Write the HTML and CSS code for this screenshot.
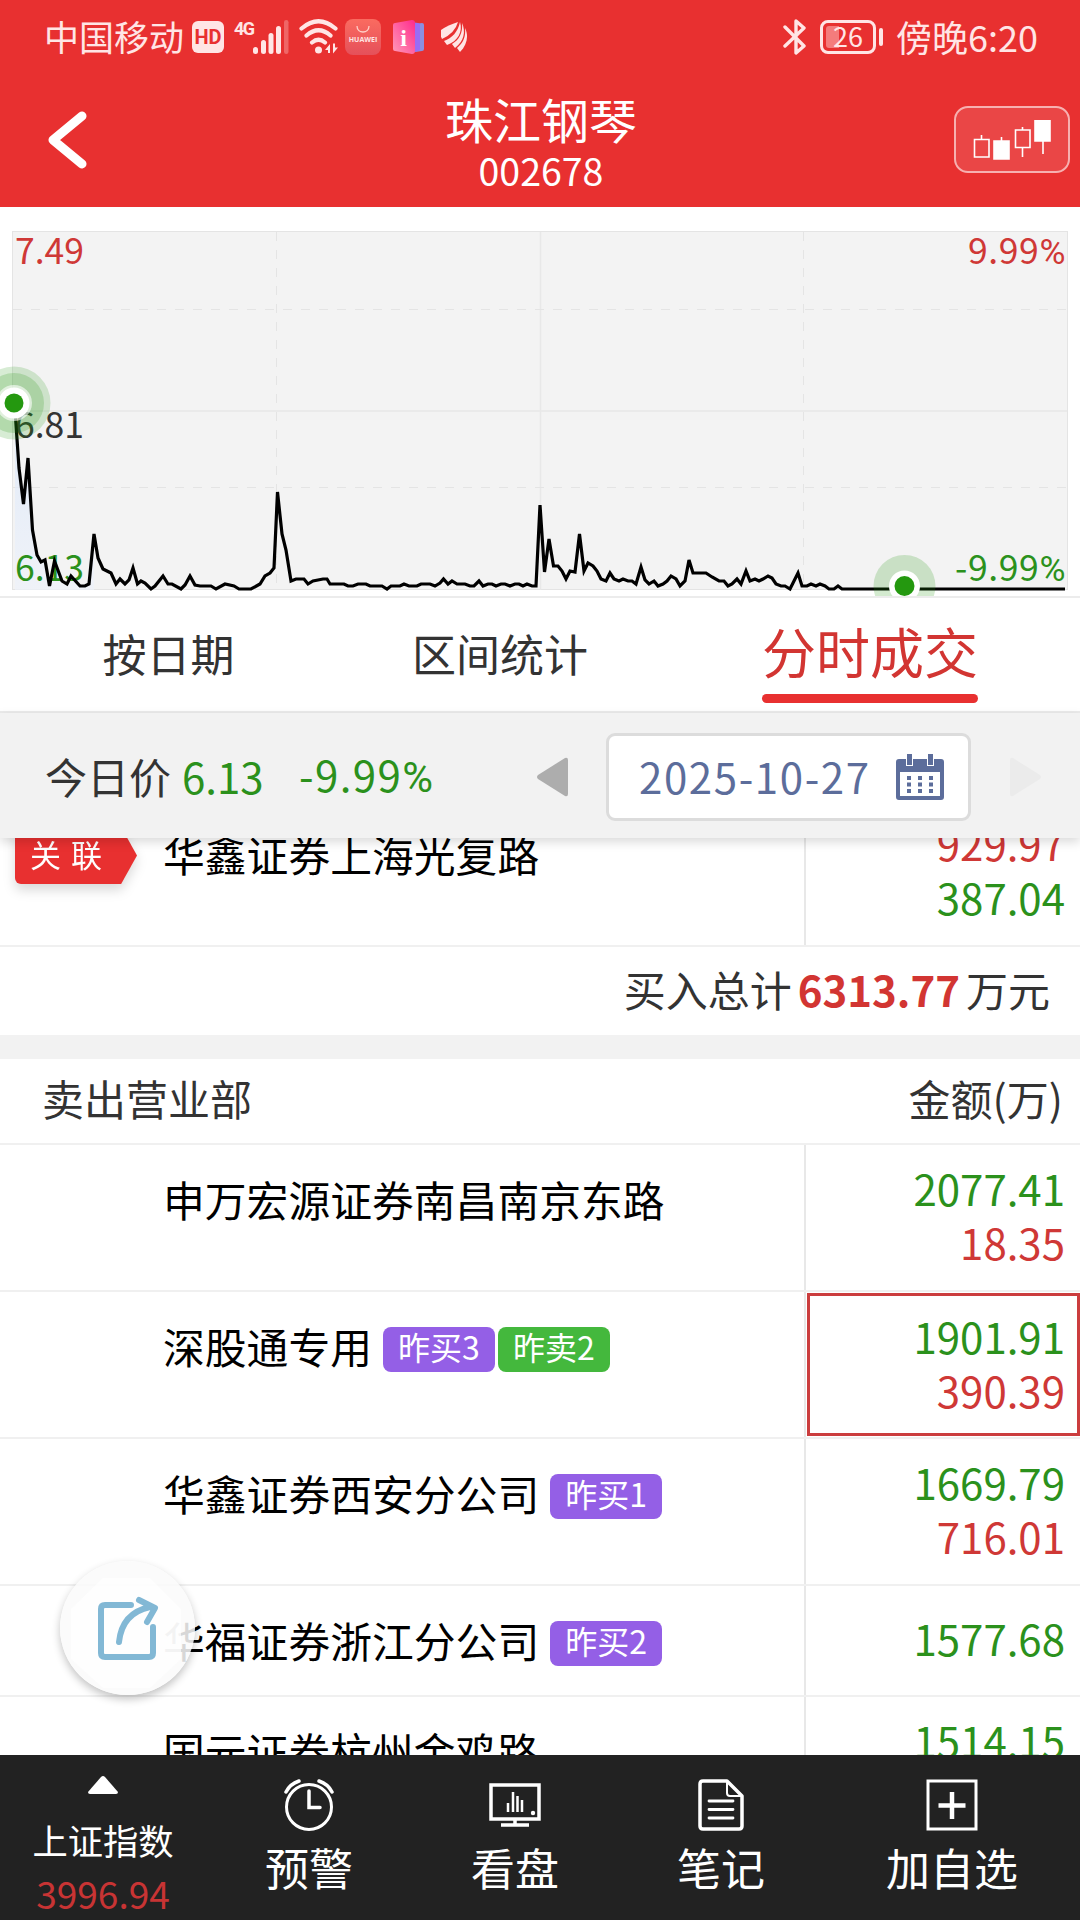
FILE: index.html
```html
<!DOCTYPE html>
<html lang="zh-CN">
<head>
  <meta charset="UTF-8">
  <title>珠江钢琴 002678</title>
  <link rel="stylesheet" href="styles.css">
</head>
<body>
  <div class="status">
    <span class="carrier">中国移动</span>
    <span class="hd">HD</span>
    <span class="net">4G</span>
    <svg class="signal" width="36" height="34" viewBox="0 0 36 34" fill="#ffe5e5">
      <rect x="0" y="27" width="5" height="7" rx="2.5"/>
      <rect x="8" y="20" width="5" height="14" rx="2.5"/>
      <rect x="15.5" y="13" width="5" height="21" rx="2.5"/>
      <rect x="23" y="6" width="5" height="28" rx="2.5"/>
      <rect x="31" y="0" width="4.500" height="34" rx="2.2" opacity=".3"/>
    </svg>
    <svg class="wifi" width="42" height="36" viewBox="0 0 42 36" fill="none" stroke="#ffe5e5" stroke-width="4.200" stroke-linecap="round">
      <path d="M2.500 9.500Q19.500-5 36.500 9.500M7.500 16.500Q19.500 6 31.500 16.500M13 23.500Q19.500 18 26 23.500"/>
      <circle cx="19.500" cy="31" r="3.500" fill="#ffe5e5" stroke="none"/>
      <path d="M26 31l5-6v9h-2v-3zM34 24.500v10l5-6h-3v-4z" fill="#ffe5e5" stroke="none"/>
    </svg>
    <span class="store"><svg width="14" height="7" viewBox="0 0 14 7" fill="none" stroke="#ffd0c8" stroke-width="1.300"><path d="M1 0c0 8 12 8 12 0"/></svg>HUAWEI</span>
    <svg class="info" width="32" height="34" viewBox="0 0 32 34">
      <path d="M22 4l7-1q2 0 2 2v24q0 2-2 2l-7 1z" fill="#8b8fe0"/>
      <path d="M18 2l7 1q2 0 2 2v24q0 2-2 2l-7 2z" fill="#9a6cf5"/>
      <path d="M2 3L19 0q3 0 3 3v28q0 3-3 3L2 31q-2 0-2-2V5q0-2 2-2z" fill="url(#pink)"/>
      <text x="10.500" y="26" class="info-i">i</text>
      <defs><linearGradient id="pink" x1="0" y1="1" x2="1" y2="0"><stop offset="0" stop-color="#ff9ab8"/><stop offset="1" stop-color="#ff2a8c"/></linearGradient></defs>
    </svg>
    <svg class="wing" width="27" height="32" viewBox="0 0 27 32" fill="#ffe5e5">
      <path d="M0 9Q7 4 17 1Q14 12 1 18Q-1 14 0 9z"/>
      <path d="M19 1C17 11 11 17 3 20l3 4C17 20 22 11 19 1z"/>
      <path d="M21 2C22 12 18 19 11 23l3 4C23 20 25 11 21 2z"/>
      <path d="M24 7c1 9-2 15-8 20l3 4c7-7 9-16 5-24z"/>
    </svg>
    <svg class="bt" width="24" height="38" viewBox="0 0 24 38" fill="none" stroke="#ffe5e5" stroke-width="3.400" stroke-linejoin="round" stroke-linecap="round">
      <path d="M2 9l19 19-8 7V3l8 7L2 28"/>
    </svg>
    <span class="battery"><i></i><b>26</b></span>
    <span class="nub"></span>
    <span class="time">傍晚6:20</span>
  </div>

  <div class="header">
    <svg class="back" width="44" height="62" viewBox="0 0 44 62" fill="none" stroke="#fff" stroke-width="9" stroke-linecap="round" stroke-linejoin="round">
      <path d="M38 7L9 31l29 24"/>
    </svg>
    <div class="stock">
      <div class="stock-name">珠江钢琴</div>
      <div class="stock-code">002678</div>
    </div>
    <div class="kline">
      <svg width="80" height="40" viewBox="0 0 80 40" fill="none" stroke="#fff" stroke-width="1.600">
        <path d="M1.500 19.500h14.500v17.500h-14.500zM8.500 19v-4M28.500 22v-5M42.500 10h14.500v17.500h-14.500zM49.500 10V7M49.500 28v9M70 20v14"/>
        <path d="M21 21h15v18H21zM62 0.800h15V21H62z" fill="#fff"/>
      </svg>
    </div>
  </div>

  <div class="chart">
    <svg width="1080" height="389" viewBox="0 207 1080 389">
      <defs>
        <linearGradient id="area" x1="0" y1="400" x2="0" y2="590" gradientUnits="userSpaceOnUse">
          <stop offset="0" stop-color="#d8e6fa" stop-opacity=".7"/>
          <stop offset="1" stop-color="#eef2fa" stop-opacity=".7"/>
        </linearGradient>
      </defs>
      <rect x="12.500" y="231.500" width="1055" height="358" fill="#f3f3f3" stroke="#e4e4e4"/>
      <path d="M13 411h1054M540.500 232v358" stroke="#e8e8e8" stroke-width="1.500"/>
      <path d="M13 309.500h1054M13 487.500h1054M276.500 232v358M803.500 232v358" stroke="#e4e4e4" stroke-dasharray="9 9"/>
      <path d="M15 410L19 468L23.500 504L28 458L32.500 530L37 555L41 563L45 560L49.500 586L55 561L63 581L67 584L72 575L80 586L85 586L89 584L94 534V590H15z" fill="url(#area)"/>
      <text x="15" y="264" class="up">7.49</text>
      <text x="1066" y="264" class="up end">9.99<tspan class="pct">%</tspan></text>
      <text x="15" y="438" class="mid">6.81</text>
      <text x="15" y="581" class="down">6.13</text>
      <text x="1066" y="581" class="down end">-9.99<tspan class="pct">%</tspan></text>
      <polyline class="price" points="15,410 19,468 23.500,504 28,458 32.500,530 37,555 41,562 45,560 49.500,586 54.500,561 62,581 67,584 71,576 80,586 85,586 89,584 94,534 98,558 103,569 111,573 116,584 120,579 125,584 129,580 133,568 137.500,584 141,581 145,583 151,589 155,586 163,576 168,584 172,584 181,589 185,585 190,576 195,585 200,586 211,586 216,589 225,584 234,586 239,589 251,589 260,584 265,576 270,573 274,568 277.500,492 282,534 286,550 291,581 296,579 304,579 308,584 313,581 323,579 327,579 330,584 344,584 348,586 353,586 358,584 366,584 370,586 382,586 387,589 391,586 400,586 404,584 409,586 417,586 421,584 430,584 435,586 440,583 443.500,579 448,584 452,581 457,584 465,584 470,586 474,586 479,581 483,586 488,584 492,584 496,586 501,584 505,584 510,586 515,584 519,584 523,586 527,584 532,586 536,586 540,505 544.500,572 549,539 553.500,566 558,566 562,571 566,579 570,571 575,572 579.500,534 584,571 588,563 593,566 597,571 601,579 606,581 610,573 614,579 619,581 623,579 628,581 632,581 636,584 641,567 645,580 649,584 654,581 658,586 663,584 667,581 671,576 676,579 680,586 685,581 689,560 693,573 706,573 712,577 719,581 724,581 728,586 732,584 737,579 741,584 746,571 750,581 755,579 759,581 763,579 768,576 772,578 776,584 781,586 785,586 790,589 798,573 802,586 807,586 811,584 816,586 820,584 825,586 829,589 834,589 838,586 842,589 1065,589"/>
      <g fill="#24980f">
        <circle cx="14" cy="403" r="36.500" fill-opacity=".18"/>
        <circle cx="14" cy="403" r="30" fill-opacity=".2"/>
        <circle cx="14" cy="403" r="18" fill="#fff" fill-opacity=".6"/>
        <circle cx="14" cy="403" r="15.500" fill="#fff"/>
        <circle cx="14" cy="403" r="9.500"/>
        <circle cx="904.500" cy="586" r="31" fill-opacity=".2"/>
        <circle cx="904.500" cy="586" r="15.500" fill="#fff"/>
        <circle cx="904.500" cy="586" r="10"/>
      </g>
    </svg>
  </div>

  <div class="tabs">
    <div class="tab">按日期</div>
    <div class="tab">区间统计</div>
    <div class="tab active"><span>分时成交</span></div>
  </div>

  <div class="datebar">
    <span class="today">今日价</span>
    <span class="today-price">6.13</span>
    <span class="today-rate">-9.99<span class="pct">%</span></span>
    <svg class="prev" width="32" height="40" viewBox="0 0 32 40" fill="#adadad"><path d="M1 18L28 1q3-1 3 2v34q0 3-3 2L1 22q-2-2 0-4z"/></svg>
    <div class="date">
      <span>2025-10-27</span>
      <svg width="48" height="46" viewBox="0 0 48 46" fill="#5c6d9b">
        <path d="M3 5h42q3 0 3 3v35q0 3-3 3H3q-3 0-3-3V8q0-3 3-3zM4 18v24h40V18z" fill-rule="evenodd"/>
        <path d="M10 0h7v12h-7zM31 0h7v12h-7z" fill="#fff"/>
        <path d="M11 0h5v11h-5zM32 0h5v11h-5zM11 22h4v4h-4zM22 22h4v4h-4zM33 22h4v4h-4zM11 28.500h4v4h-4zM22 28.500h4v4h-4zM33 28.500h4v4h-4zM11 35h4v4h-4zM22 35h4v4h-4zM33 35h4v4h-4z"/>
      </svg>
    </div>
    <svg class="next" width="32" height="40" viewBox="0 0 32 40" fill="#ebebeb"><path d="M31 18L4 1Q1 0 1 3v34q0 3 3 2l27-17q2-2 0-4z"/></svg>
  </div>

  <div class="list">
    <div class="row first">
      <div class="mark"><div class="tag"><span>关 联</span></div></div>
      <div class="name">华鑫证券上海光复路</div>
      <div class="money"><p class="red">929.97</p><p class="green">387.04</p></div>
    </div>
    <div class="total">买入总计<b>6313.77</b>万元</div>
    <div class="band"></div>
    <div class="list-head"><span>卖出营业部</span><span>金额(万)</span></div>
    <div class="row">
      <div class="mark"></div>
      <div class="name">申万宏源证券南昌南京东路</div>
      <div class="money"><p class="green">2077.41</p><p class="red">18.35</p></div>
    </div>
    <div class="row">
      <div class="mark"></div>
      <div class="name">深股通专用<span class="badge">昨买3</span><span class="badge sell">昨卖2</span></div>
      <div class="money selected"><p class="green">1901.91</p><p class="red">390.39</p></div>
    </div>
    <div class="row">
      <div class="mark"></div>
      <div class="name">华鑫证券西安分公司<span class="badge">昨买1</span></div>
      <div class="money"><p class="green">1669.79</p><p class="red">716.01</p></div>
    </div>
    <div class="row short">
      <div class="mark"></div>
      <div class="name">华福证券浙江分公司<span class="badge">昨买2</span></div>
      <div class="money"><p class="green">1577.68</p></div>
    </div>
    <div class="row last">
      <div class="mark"></div>
      <div class="name">国元证券杭州金鸡路</div>
      <div class="money"><p class="green">1514.15</p></div>
    </div>
  </div>

  <div class="share">
    <svg width="134" height="134" viewBox="0 0 134 134" fill="none">
      <path d="M43 17h47l31 31v50l-31 29H43L11 98V48z" fill="#fff" fill-opacity=".7"/>
      <path d="M71 44H45q-4 0-4 4v44q0 4 4 4h44q4 0 4-4V66M59 81Q62 52 90 46M79 39l16 8-8 14" stroke="#82b8d5" stroke-width="6" stroke-linecap="round" stroke-linejoin="round"/>
    </svg>
  </div>

  <div class="bottom">
    <div class="index">
      <svg width="30" height="18" viewBox="0 0 30 18" fill="#fff"><path d="M13 1q2-2 4 0l13 15q0 2-2 2H2q-2 0-2-2z"/></svg>
      <div class="index-name">上证指数</div>
      <div class="index-value">3996.94</div>
    </div>
    <div class="item">
      <svg width="50" height="52" viewBox="0 0 50 52" fill="none" stroke="#fff" stroke-width="3" stroke-linecap="round">
        <circle cx="25" cy="28" r="22.500"/>
        <path d="M25 12v16.500h11" stroke-width="3.500"/>
        <path d="M2 13Q6 5 15 2M48 13Q44 5 35 2" stroke-width="3.500"/>
      </svg>
      <span>预警</span>
    </div>
    <div class="item">
      <svg width="52" height="52" viewBox="0 0 52 52" fill="none" stroke="#fff" stroke-width="3.500">
        <path d="M2 6h48v34H2zM26 40v6M12 46h28"/>
        <path d="M19 24v9M24 13v20M28.500 17v16M33 21v12" stroke-width="2.500"/>
        <circle cx="44" cy="34" r="2.200" fill="#fff" stroke="none"/>
      </svg>
      <span>看盘</span>
    </div>
    <div class="item">
      <svg width="46" height="52" viewBox="0 0 46 52" fill="none" stroke="#fff" stroke-width="3.500" stroke-linejoin="round">
        <path d="M5 2h24l15 15v30q0 3-3 3H5q-3 0-3-3V5q0-3 3-3z"/>
        <path d="M29 2v12q0 3 3 3h12" stroke-width="2"/>
        <path d="M11 22h24M11 30.500h24M11 39h24" stroke-width="2.800" stroke-linecap="round"/>
      </svg>
      <span>笔记</span>
    </div>
    <div class="item add">
      <svg width="52" height="52" viewBox="0 0 52 52" fill="none" stroke="#fff" stroke-width="3">
        <path d="M2 2h48v48H2z"/>
        <path d="M12.500 26.500h27M26 13v27" stroke-width="4.500"/>
      </svg>
      <span>加自选</span>
    </div>
  </div>
</body>
</html>
```
FILE: styles.css
```css
* {
  box-sizing: border-box;
}
body {
  margin: 0;
  width: 1080px;
  height: 1920px;
  overflow: hidden;
  display: flex;
  flex-direction: column;
  background: #fff;
  color: #333;
  font-family: "Noto Sans CJK SC", "Noto Sans", sans-serif;
  font-size: 42px;
}
p { margin: 0; }
svg { display: block; flex: none; }
.pct { font-family: Roboto, sans-serif; }

/* status bar */
.status {
  height: 74px;
  padding-left: 44px;
  display: flex;
  align-items: center;
  flex: none;
  background: #e83030;
  color: #ffe5e5;
  font-size: 35px;
  line-height: 68px;
  white-space: nowrap;
}
.carrier { width: 148px; height: 70px; }
.hd {
  width: 32px;
  height: 32px;
  border-radius: 6px;
  background: #ffe5e5;
  color: #e83030;
  font: bold 20px/32px Roboto, sans-serif;
  text-align: center;
}
.net {
  width: 19px;
  height: 32px;
  margin: 0 0 0 10px;
  font: bold 18px/16px Roboto, sans-serif;
  letter-spacing: -1.5px;
}
.wifi { margin-left: 10px; }
.store {
  width: 36px;
  height: 36px;
  margin-left: 4px;
  padding-top: 7px;
  border-radius: 8px;
  background: linear-gradient(#fa6b60, #e5505a);
  color: #ffe5e5;
  font: bold 7px/14px "Open Sans", sans-serif;
  text-align: center;
}
.store svg { margin: 0 auto; }
.info { margin-left: 12px; }
.info-i {
  font: bold 24px "Liberation Serif", serif;
  fill: #fff;
  text-anchor: middle;
}
.wing { margin-left: 16px; }
.bt { margin-left: 315px; }
.battery {
  position: relative;
  width: 56px;
  height: 34px;
  margin-left: 13px;
  border: 3px solid #ffe5e5;
  border-radius: 8px;
  text-align: center;
}
.battery i {
  position: absolute;
  left: 3px;
  top: 3px;
  width: 13px;
  height: 22px;
  border-radius: 3px 0 0 3px;
  background: #f47c7c;
}
.battery b {
  position: relative;
  display: block;
  font-size: 27px;
  font-weight: normal;
  line-height: 25px;
}
.nub {
  width: 4px;
  height: 18px;
  margin-left: 3px;
  border-radius: 2px;
  background: #ffe5e5;
}
.time { height: 70px; margin-left: 13px; font-size: 36px; }

/* title */
.header {
  height: 133px;
  padding: 0 10px 0 44px;
  display: flex;
  justify-content: space-between;
  flex: none;
  background: #e83030;
  color: #fff;
}
.back { margin-top: 35px; }
.stock {
  width: 300px;
  margin-left: 40px;
  text-align: center;
}
.stock-name {
  margin-top: 13px;
  font-size: 48px;
  line-height: 62px;
}
.stock-code {
  font-size: 37.5px;
  line-height: 42px;
}
.kline {
  width: 116px;
  height: 67px;
  margin-top: 32px;
  padding: 12px 0 0 17px;
  border: 2px solid #f7b0b0;
  border-radius: 14px;
  background: #ea4646;
}

/* chart */
.chart {
  height: 391px;
  flex: none;
  border-bottom: 2px solid #ececec;
}
.chart text {
  font-size: 35.5px;
}
.chart .end { text-anchor: end; letter-spacing: .6px; }
.up { fill: #cf3836; }
.mid { fill: #333; }
.down { fill: #2b911c; }
.price {
  fill: none;
  stroke: #000;
  stroke-width: 3.2;
}

/* tabs */
.tabs {
  height: 115px;
  display: grid;
  grid-template-columns: 337px 326px 414px;
  flex: none;
  border-bottom: 2px solid #ebebeb;
}
.tab {
  font-size: 44px;
  line-height: 111px;
  text-align: center;
}
.active {
  color: #d23532;
  font-size: 54px;
}
.active span {
  position: relative;
  display: inline-block;
  height: 105px;
  line-height: 105px;
  vertical-align: top;
}
.active span::after {
  content: "";
  position: absolute;
  left: 0;
  right: 0;
  bottom: 0;
  height: 9px;
  border-radius: 5px;
  background: #e83030;
}

/* date */
.datebar {
  position: relative;
  z-index: 2;
  height: 125px;
  padding-left: 45px;
  display: flex;
  align-items: center;
  flex: none;
  background: #f2f2f2;
  box-shadow: 0 4px 10px rgba(0, 0, 0, .15);
  white-space: nowrap;
}
.datebar > span { line-height: 118px; }
.datebar > svg, .date { margin-top: 3px; }
.today-price {
  width: 117px;
  margin-left: 11px;
  color: #2b911c;
}
.today-rate {
  width: 238px;
  color: #2b911c;
  letter-spacing: 1.4px;
}
.today { width: 126px; }
.date {
  width: 365px;
  height: 88px;
  margin-left: 37px;
  padding: 0 24px 0 30px;
  display: flex;
  align-items: center;
  justify-content: space-between;
  border: 3px solid #dcdcdc;
  border-radius: 9px;
  background: #fff;
  color: #5c6d9b;
  letter-spacing: 1.6px;
  line-height: 76px;
}
.date span { height: 79px; }
.next { margin-left: 38px; }

/* list */
.list {
  height: 917px;
  overflow: hidden;
  flex: none;
}
.row {
  height: 147px;
  display: flex;
  border-bottom: 2px solid #f0f0f0;
  color: #000;
}
.first { margin-top: -38px; }
.short { height: 111px; }
.mark {
  width: 163px;
  padding: 27px 0 0 15px;
}
.tag {
  width: 122px;
  filter: drop-shadow(0 6px 6px rgba(0, 0, 0, .15));
}
.tag span {
  display: block;
  height: 57px;
  padding-left: 15px;
  border-radius: 0 0 0 6px;
  background: #e83030;
  clip-path: polygon(0 0, 87% 0, 100% 50%, 87% 100%, 0 100%);
  color: #fff;
  font-size: 31px;
  line-height: 53px;
  word-spacing: 3px;
}
.name {
  width: 643px;
  padding-top: 24px;
  display: flex;
  align-items: flex-start;
  border-right: 2px solid #e8e8e8;
  font-size: 41.8px;
  line-height: 60px;
  white-space: nowrap;
}
.badge {
  width: 112px;
  height: 45px;
  margin: 11px 0 0 11px;
  border-radius: 8px;
  background: #945fe6;
  color: #fff;
  font-size: 32px;
  line-height: 39px;
  text-align: center;
}
.badge + .badge { margin-left: 3px; }
.sell { background: #44b83d; }
.money {
  flex: 1;
  padding-right: 15px;
  display: flex;
  flex-direction: column;
  justify-content: center;
  text-align: right;
  line-height: 54px;
  padding-bottom: 5px;
}
.selected {
  margin: 1px 0 1px 1px;
  padding: 0 12px 4px 0;
  border: 3px solid #cb3d3e;
}
.last .money {
  justify-content: flex-start;
  padding-top: 16px;
}
.red { color: #cf3836; }
.green { color: #2b911c; }
.total {
  height: 88px;
  padding-right: 30px;
  text-align: right;
  line-height: 83px;
}
.total b {
  margin: 0 6px;
  color: #d23532;
  font-size: 42px;
}
.band {
  height: 24px;
  background: #f2f2f2;
}
.list-head {
  height: 86px;
  padding: 0 17px 0 42px;
  display: flex;
  justify-content: space-between;
  border-bottom: 2px solid #f0f0f0;
  line-height: 77px;
}

/* floating share button */
.share {
  position: absolute;
  left: 60px;
  top: 1561px;
  z-index: 3;
  width: 135px;
  height: 134px;
  border-radius: 50%;
  background: rgba(250, 250, 250, .86);
  box-shadow: 0 4px 9px rgba(0, 0, 0, .24);
}

/* bottom bar */
.bottom {
  height: 165px;
  display: grid;
  grid-template-columns: 206px 206px 206px 206px 256px;
  flex: none;
  background: #222;
  color: #fff;
  text-align: center;
}
.index svg { margin: 21px auto 0; }
.index-name {
  margin-top: 18px;
  font-size: 35.3px;
  line-height: 56px;
}
.index-value {
  color: #c83434;
  font-size: 37px;
  line-height: 50px;
}
.item { font-size: 44px; }
.item svg { margin: 24px auto 0; }
.item span {
  display: block;
  margin-top: 8px;
  line-height: 56px;
}
```
